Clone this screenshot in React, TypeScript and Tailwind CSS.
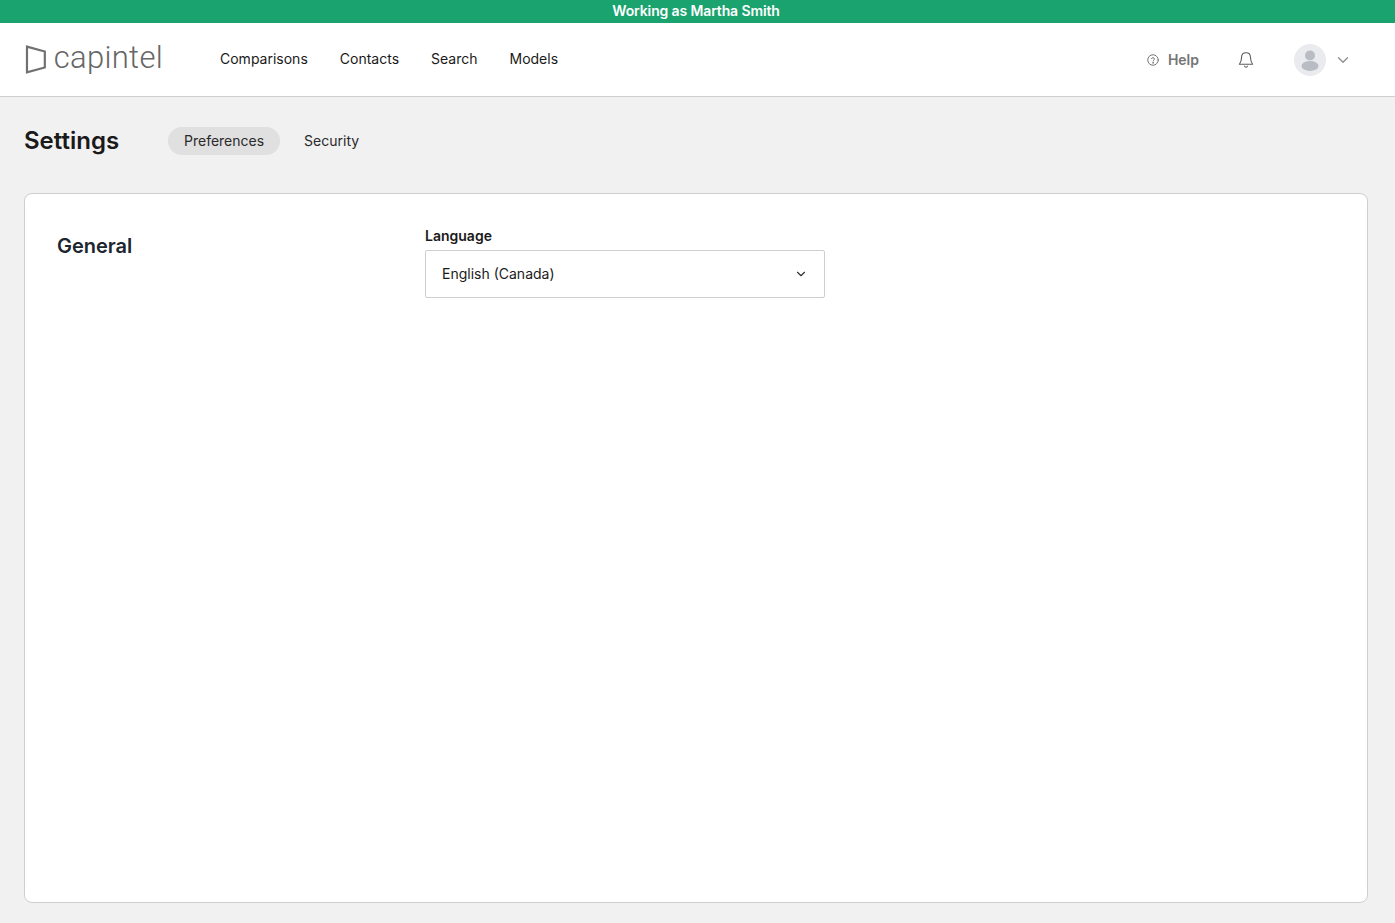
import { ChevronDown } from "lucide-react";

const navItems = ["Comparisons", "Contacts", "Search", "Models"];

function Logo() {
  return (
    <div className="flex items-center w-[138px]">
      <svg width="22" height="29" viewBox="0 0 22 29" fill="none" className="mr-[7px]">
        <path d="M2 1.500 L20 6.500 L20 22.500 L2 27.500 Z" stroke="#707070" strokeWidth="2.200" />
      </svg>
      <span className="font-['Roboto',sans-serif] font-light text-[31px] leading-none tracking-[0.3px] text-[#666666] -mt-[5px]">
        capintel
      </span>
    </div>
  );
}

function TopNav() {
  return (
    <div className="h-[74px] bg-white border-b border-[#cfcfcf] flex items-center pl-[25px] pr-[43px] box-border">
      <Logo />
      <nav className="flex items-center gap-[32px] ml-[57px] -mt-[2px]">
        {navItems.map((item) => (
          <a key={item} className="text-[14px] leading-5 text-[#1a1a1a]">
            {item}
          </a>
        ))}
      </nav>
      <div className="ml-auto flex items-center">
        <div className="flex items-center gap-[9px] text-[#757575]">
          <svg width="12" height="12" viewBox="0 0 24 24" fill="none" stroke="currentColor" strokeWidth="2" strokeLinecap="round">
            <circle cx="12" cy="12" r="10.500" />
            <path d="M9 9.200a3 3 0 0 1 5.800 1c0 2-2.800 2.400-2.800 4" />
            <circle cx="12" cy="17.800" r="0.600" />
          </svg>
          <span className="text-[14px] leading-5 font-semibold">Help</span>
        </div>
        <svg width="16" height="18" viewBox="0.500 0.500 15 15.500" fill="none" stroke="#5c5c5c" strokeWidth="1" strokeLinecap="round" strokeLinejoin="round" className="ml-[39px]">
          <path d="M8 1.500c-2.700 0-4.200 2-4.200 4.500 0 3.200-.8 4.700-2 6.200h12.400c-1.200-1.500-2-3-2-6.200 0-2.500-1.500-4.500-4.200-4.500z" />
          <path d="M6.600 14a1.500 1.500 0 0 0 2.800 0" />
        </svg>
        <div className="ml-[40px] w-[32px] h-[32px] rounded-full bg-[#e9ebee] flex items-center justify-center">
          <svg width="20" height="22" viewBox="0 0 20 22" fill="#b9bdc3">
            <circle cx="10" cy="6.500" r="5" />
            <ellipse cx="10" cy="17" rx="8.500" ry="5" />
          </svg>
        </div>
        <ChevronDown size={18} strokeWidth={1.800} className="ml-[8px] text-[#8f8f8f]" />
      </div>
    </div>
  );
}

export default function App() {
  return (
    <div className="min-h-[923px] bg-[#f1f1f1] font-['Inter',sans-serif] flex flex-col">
      <div className="h-[23px] bg-[#1aa36f] text-white text-[14px] leading-[21px] tracking-[-0.13px] font-semibold text-center pr-[3px]">
        Working as Martha Smith
      </div>
      <TopNav />
      <main className="flex-1 flex flex-col px-[24px] pr-[27px] pb-[20px]">
        <div className="flex items-center h-[28px] mt-[30px]">
          <h1 className="text-[24px] leading-7 font-semibold text-[#1a1a1a] w-[144px]">Settings</h1>
          <div className="flex items-center gap-[8px]">
            <div className="h-[28px] px-[16px] rounded-full bg-[#e0e0e0] text-[14px] leading-[28px] text-[#2a2a2a]">
              Preferences
            </div>
            <div className="h-[28px] px-[16px] text-[14px] leading-[28px] text-[#2a2a2a]">Security</div>
          </div>
        </div>
        <section className="flex-1 mt-[38px] bg-white border border-[#cfcfcf] rounded-[8px] pl-[32px] pt-[33px] flex items-start">
          <h2 className="w-[368px] text-[20px] leading-7 mt-[5px] font-semibold text-[#1c2530]">General</h2>
          <div className="w-[400px]">
            <label className="block text-[14px] leading-[18px] font-semibold text-[#1a1a1a] mb-[5px]">Language</label>
            <div className="h-[48px] border border-[#cfcfcf] rounded-[2px] bg-white flex items-center justify-between pl-[16px] pr-[16px]">
              <span className="text-[14px] leading-5 text-[#1a1a1a]">English (Canada)</span>
              <ChevronDown size={14} strokeWidth={2} className="text-[#333333]" />
            </div>
          </div>
        </section>
      </main>
    </div>
  );
}
